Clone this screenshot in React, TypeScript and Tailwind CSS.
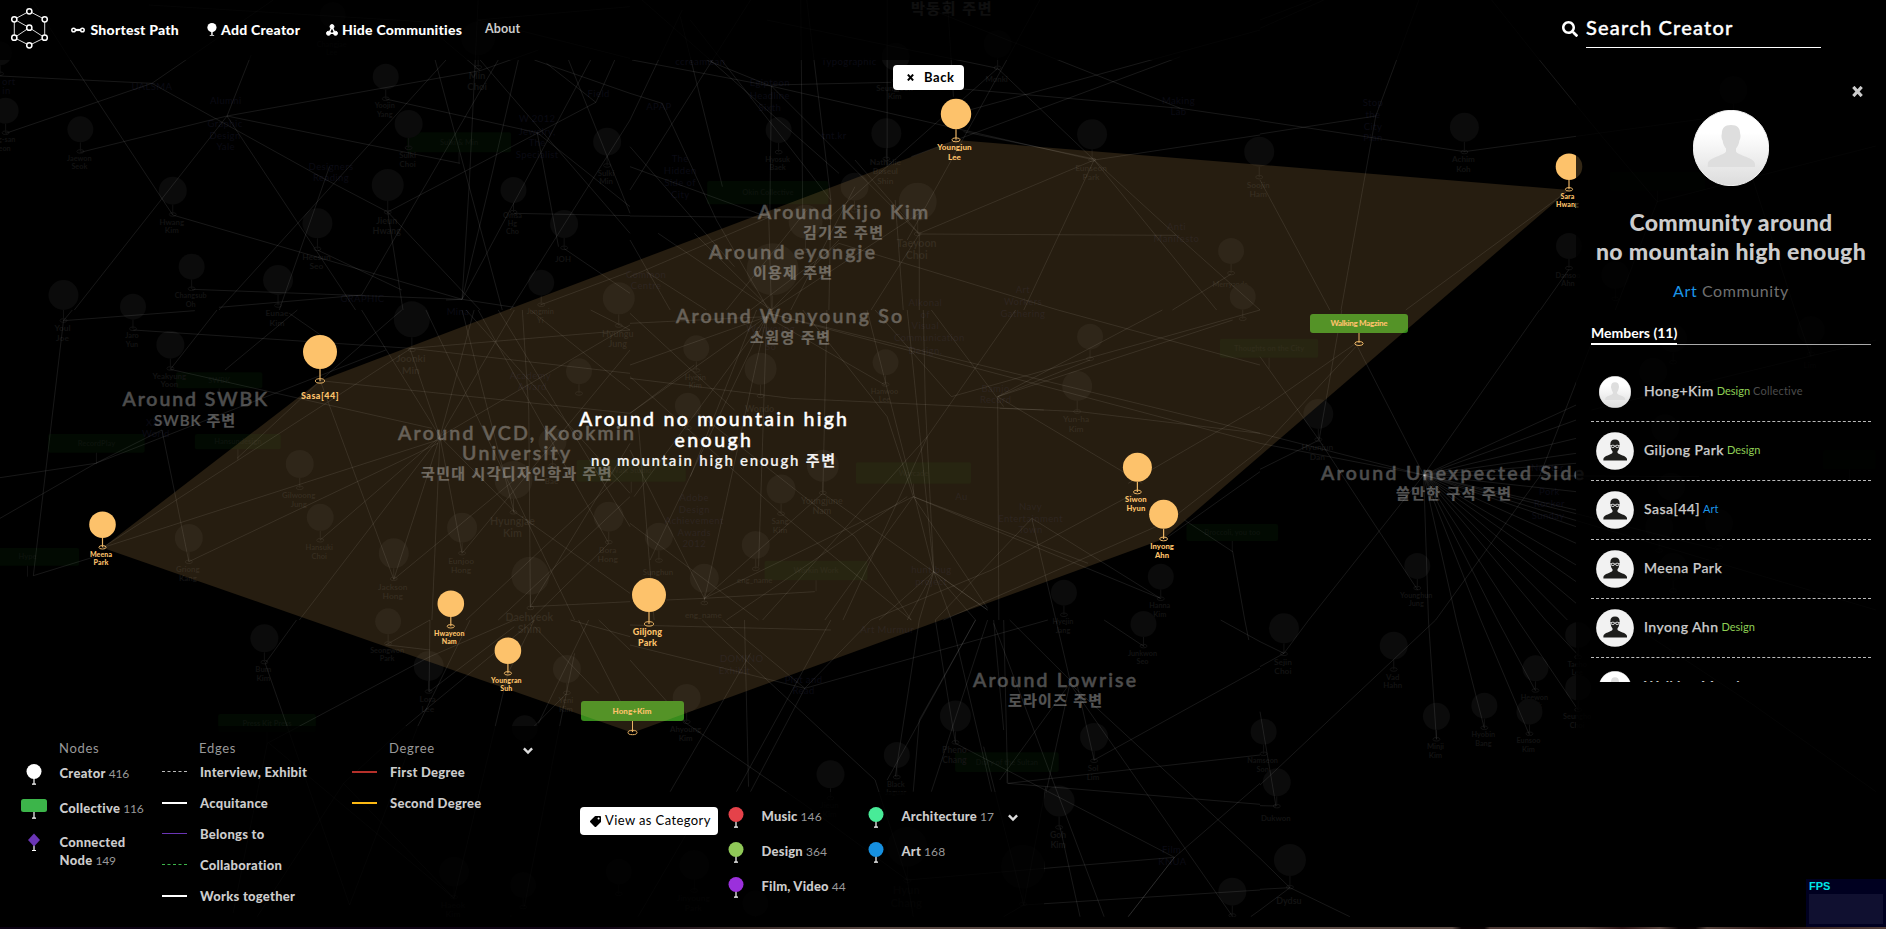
import { FaSearch, FaTag } from "react-icons/fa";

type Seg = [number, number, number, number];
type FaintNode = [number, number, number, string];
type Box = [number, number, number, number, string];
type Note = [number, number, string];

interface Sector {
  ox: number;
  oy: number;
  sx: number;
  edges: Seg[];
  nodes: FaintNode[];
  boxes: Box[];
  notes: Note[];
}

const SX = 0.4018;
const SXR = 0.3992;
const SY = 1 / 3;

const sectors: Sector[] = [
  {
    ox: 0, oy: 0, sx: SX,
    edges: [
      [0, 228, 378, 250], [378, 250, 680, 0], [378, 250, 14, 400], [378, 250, 805, 535], [805, 535, 965, 636],
      [80, 0, 175, 180], [175, 180, 430, 645], [430, 645, 1150, 898], [565, 348, 625, 165], [565, 348, 200, 457],
      [565, 348, 1195, 212], [565, 348, 1145, 490], [565, 348, 185, 930], [565, 348, 885, 930], [960, 297, 1337, 398],
      [965, 636, 1483, 307], [965, 636, 1003, 930], [965, 636, 1195, 930], [1190, 0, 1168, 550], [1168, 550, 1150, 898],
      [1110, 180, 545, 930], [1083, 180, 1250, 930], [1195, 180, 1568, 700], [1290, 180, 1225, 520], [1225, 520, 1150, 898],
      [1330, 180, 1568, 280], [1360, 190, 1483, 307], [1337, 398, 1390, 740], [1337, 398, 1568, 620], [1280, 640, 1568, 647],
      [1403, 745, 1568, 880], [1470, 180, 1150, 898], [1415, 180, 1568, 640], [1568, 360, 1270, 930], [1530, 180, 1483, 307],
      [478, 868, 1150, 898], [545, 922, 900, 885], [790, 750, 1000, 870], [820, 500, 695, 930], [1150, 898, 1280, 922],
      [1110, 900, 1150, 898], [1240, 180, 900, 885], [370, 15, 1050, 65], [1195, 212, 1340, 150], [1050, 65, 1195, 212],
      [1190, 60, 1568, 175], [1190, 60, 1568, 20], [1345, 915, 1568, 815],
    ],
    nodes: [
      [960, 230, 13, "Yoojin|Yang"], [200, 388, 13, "Jaewon|Seok"], [14, 332, 13, "ng-san|eon"], [1017, 372, 14, "Sulki|Choi"],
      [965, 555, 16, "Jieun|Hwang"], [430, 572, 14, "Hwang|Kim"], [790, 670, 15, "Heesun|Seo"], [477, 800, 13, "Changsub|Oh"],
      [1278, 570, 13, "Omsa|Hg|Cho"], [1404, 672, 14, "JOH"], [1511, 425, 14, "Sulki|Min"], [158, 885, 15, "Youl|Joe"],
      [331, 920, 13, "Jaro|Yun"], [692, 840, 15, "Eunae|Kim"], [1025, 958, 18, "Joonki|Min"], [1347, 848, 13, "Jungmin|Yi"],
      [0, 160, 12, ""], [1540, 895, 16, "Hyungu|Jung"], [1190, 115, 17, "Min|Choi"], [828, 45, 13, "Changjae|Lee"],
    ],
    boxes: [[1013, 397, 1272, 457, "Sulki & Min"]],
    notes: [
      [22, 247, "ort"], [16, 272, "in"],
      [378, 262, "UALSMA"], [562, 302, "Alumni"], [560, 372, "Graphic"], [560, 407, "Design"], [562, 442, "Yale"],
      [824, 500, "Designers"], [824, 535, "Reading"], [1337, 358, "W 2012"], [1337, 396, "Jewelry,"], [1337, 430, "The"],
      [1337, 466, "Specialist"], [1490, 282, "Field"], [902, 898, "GRAPHIC"],
    ],
  },
  {
    ox: 630, oy: 0, sx: SX,
    edges: [
      [5, 180, 350, 258], [350, 258, 1155, 480], [352, 255, 650, 247], [352, 258, 348, 650], [425, 0, 430, 655],
      [440, 0, 500, 600], [640, 0, 640, 500], [345, 640, 352, 930], [0, 280, 80, 310], [80, 310, 215, 660], [0, 360, 130, 30],
      [125, 50, 230, 560], [300, 0, 0, 570], [150, 60, 500, 600], [30, 0, 520, 520], [0, 648, 345, 652], [345, 652, 0, 830],
      [810, 265, 1370, 325], [1370, 325, 1568, 360], [1160, 478, 830, 395], [700, 470, 1370, 170], [1155, 480, 1568, 405],
      [1155, 480, 720, 700], [720, 702, 1360, 706], [1155, 480, 1360, 706], [1360, 706, 1568, 930], [1155, 480, 980, 930],
      [1155, 480, 1460, 930], [720, 702, 720, 930], [720, 702, 560, 480], [720, 702, 352, 258], [520, 730, 1065, 930],
      [730, 20, 1370, 325], [1020, 0, 690, 720], [915, 205, 1155, 480], [915, 205, 340, 60], [915, 205, 490, 660],
      [845, 330, 1568, 90], [1350, 930, 1495, 823], [790, 0, 805, 290], [345, 652, 0, 500], [352, 930, 70, 700],
      [352, 930, 520, 720], [352, 930, 160, 700], [352, 930, 720, 640], [660, 600, 680, 930], [440, 630, 240, 930],
      [520, 730, 300, 930], [0, 720, 100, 930], [40, 815, 190, 930], [350, 258, 190, 180], [215, 660, 345, 930], [500, 600, 495, 930],
      [720, 702, 600, 930], [560, 560, 400, 930], [0, 440, 260, 800],
    ],
    nodes: [
      [661, 170, 14, "Seungjoon|Kim"], [915, 132, 14, "Monki"], [370, 390, 13, "Hyosuk|Baek"], [638, 400, 15, "Nathalie|Boseul|Shin"],
      [1150, 403, 15, "Eunseon|Park"], [1566, 455, 15, "Soojin|Ham"], [559, 560, 14, ""], [716, 605, 19, "Taeyoon|Choi"],
      [437, 665, 17, ""], [355, 808, 26, ""], [1496, 753, 13, "Merryanda"], [1525, 890, 13, ""],
    ],
    boxes: [[192, 543, 494, 613, "Okin Collective"]],
    notes: [
      [175, 186, "ccreamisan"], [545, 186, "Typographic"], [348, 250, "Egipteon"], [348, 288, "Headline"], [348, 325, "Sixth"],
      [72, 320, "APAP"], [508, 408, "tnt.kr"], [125, 478, "The"], [125, 512, "Hidden"], [125, 548, "Side of"], [125, 584, "City"],
      [1365, 303, "Making"], [1365, 337, "Lab"], [1360, 680, "Anti"], [1360, 716, "Manifesto"], [40, 825, "Common"], [40, 858, "Centre"],
      [735, 908, "Alkonal"], [978, 870, "Art"], [978, 906, "Workers"],
    ],
  },
  {
    ox: 1260, oy: 0, sx: SXR,
    edges: [
      [398, 0, 290, 348], [580, 0, 700, 180], [700, 180, 850, 400], [850, 400, 995, 605], [290, 348, 0, 402], [0, 362, 512, 455],
      [512, 455, 1120, 355], [290, 348, 203, 930], [0, 540, 175, 930], [774, 570, 365, 930], [774, 808, 702, 930],
      [995, 605, 1543, 438], [1235, 540, 1340, 930], [995, 605, 890, 930], [0, 85, 160, 0], [0, 60, 130, 0],
    ],
    nodes: [[512, 382, 14.5, "Achim|Koh"], [774, 738, 13, "Dansoo|Ahn"], [1186, 270, 14, ""], [890, 825, 14, ""]],
    boxes: [[876, 515, 1115, 572, ""]],
    notes: [[283, 310, "Stop"], [283, 344, "the"], [283, 380, "City"], [283, 414, "Plan"]],
  },
  {
    ox: 0, oy: 310, sx: SX,
    edges: [
      [158, 32, 485, 2], [158, 32, 83, 797], [332, 60, 1023, 115], [158, 32, 180, 0], [1023, 115, 1568, 60], [1023, 115, 1568, 190],
      [424, 178, 540, 0], [424, 178, 1075, 355], [403, 360, 470, 755], [0, 503, 238, 460], [238, 460, 960, 120], [0, 625, 238, 460],
      [238, 460, 403, 360], [797, 212, 1568, 310], [797, 212, 980, 808], [797, 212, 1000, 0], [83, 797, 250, 735], [255, 713, 1090, 390],
      [470, 755, 1090, 400], [255, 713, 1023, 115], [590, 445, 797, 212], [1095, 380, 797, 690], [1095, 380, 980, 808],
      [1095, 380, 1075, 930], [1095, 380, 1150, 730], [1095, 380, 745, 930], [1095, 380, 1280, 605], [1095, 380, 900, 0],
      [1095, 380, 1180, 0], [1095, 380, 1280, 0], [1095, 380, 1568, 45], [1095, 380, 1020, 115], [1280, 610, 1150, 0],
      [1320, 890, 1316, 300], [1316, 300, 1300, 0], [1320, 890, 1568, 875], [980, 808, 1310, 480], [1515, 700, 1190, 0],
      [1515, 700, 1320, 930], [1150, 730, 1568, 120], [560, 180, 740, 0], [1160, 0, 1568, 550], [1240, 0, 1568, 650],
      [1320, 0, 1568, 240], [1568, 560, 1240, 930], [1568, 470, 1160, 930], [1280, 605, 1568, 850], [1320, 890, 1568, 400],
      [1060, 0, 1430, 930], [1470, 0, 1568, 60], [720, 10, 840, 110],
    ],
    nodes: [
      [424, 104, 14, "Yeakyung|Yoon"], [1441, 184, 13, ""], [746, 462, 14, "Gilwoong|Jung"], [797, 622, 13.5, "Hansuki|Choi"],
      [470, 684, 14, "Griong|Kang"], [980, 730, 15, "Jackson|Hong"], [1150, 653, 15, "Eunjoo|Hong"], [1278, 510, 19, "Hyungjae|Kim"],
      [1320, 797, 19, "Daehyeok|Shim"], [1515, 620, 15, "Bora|Hong"], [1375, 395, 14, "|Bae"], [966, 934, 13, "Seongwon|Park"],
    ],
    boxes: [
      [438, 187, 653, 235, "SWBK"], [120, 372, 360, 428, "RecordPlay"], [485, 372, 699, 418, "Hansundesign"],
      [-60, 714, 197, 767, "Hype"], [1435, 450, 1707, 515, "Walk Studio"],
    ],
    notes: [[1320, 198, "Academy"], [1325, 232, "Award"], [388, 338, "XXX"], [388, 372, "World"], [1140, 5, "Mina"]],
  },
  {
    ox: 630, oy: 310, sx: SX,
    edges: [
      [756, 785, 690, 0], [756, 785, 735, 280], [735, 280, 730, 0], [756, 785, 590, 0], [705, 560, 1320, 865], [705, 560, 485, 930],
      [705, 560, 185, 865], [705, 560, 890, 895], [915, 260, 1145, 150], [915, 260, 1500, 30], [915, 260, 1325, 0],
      [915, 260, 918, 930], [915, 260, 1275, 520], [0, 205, 400, 265], [400, 265, 1120, 305], [345, 10, 1568, 400],
      [345, 10, 1568, 370], [1065, 0, 1568, 165], [1000, 625, 1060, 930], [1000, 625, 760, 930], [1000, 625, 1320, 865],
      [750, 0, 930, 290], [960, 0, 740, 380], [740, 380, 530, 930], [740, 380, 330, 930], [490, 0, 480, 550],
      [340, 20, 0, 310], [340, 20, 10, 560], [340, 20, 50, 750], [340, 20, 185, 870], [340, 20, 320, 770], [340, 20, 0, 40],
      [340, 20, 635, 225], [340, 20, 0, 165], [185, 865, 460, 845], [185, 865, 480, 550], [90, 870, 185, 865], [376, 610, 700, 930],
      [376, 610, 0, 200], [480, 550, 890, 900], [170, 310, 560, 680], [560, 680, 700, 930], [756, 785, 890, 900],
      [756, 785, 690, 930], [756, 785, 620, 930], [756, 785, 800, 930], [756, 785, 720, 930], [756, 785, 860, 930],
      [1263, 545, 900, 780], [900, 780, 600, 930], [1568, 420, 1328, 645], [780, 930, 1328, 640], [1380, 630, 1500, 725],
      [1500, 725, 1530, 930], [1328, 690, 1568, 485], [1240, 520, 1568, 290], [0, 420, 185, 865], [0, 10, 260, 300],
      [0, 310, 160, 165], [20, 330, 60, 930], [315, 0, 150, 500], [705, 560, 1140, 760], [430, 0, 640, 320], [640, 320, 705, 560],
      [1120, 305, 1568, 370], [690, 560, 240, 930], [610, 0, 800, 260], [800, 260, 1568, 0],
      [0, 640, 320, 930], [920, 295, 1030, 300],
    ],
    nodes: [
      [165, 115, 13, "Hyejin|Kim"], [325, 176, 16, "Wondo"], [144, 287, 13, ""], [636, 157, 13, "Hanwoo|Lee"], [1145, 80, 13, ""],
      [1113, 228, 15, "Yun-ha|Kim"], [480, 467, 16, "Youngjune|Nam"], [376, 537, 14.5, "Sang|Kim"], [72, 680, 14, "Sunghun"],
      [313, 705, 14, "eng_name"], [185, 805, 14.5, "eng_name"], [1080, 848, 13, "Hyejin|Jang"], [1321, 800, 13, "Hanna|Kim"],
    ],
    boxes: [
      [562, 457, 849, 521, "Warcade"], [335, 752, 591, 811, "Workin Work"], [1468, 86, 1713, 143, "Thoughts on the City"],
      [1385, 642, 1613, 693, "Broccoli, you too"],
    ],
    notes: [
      [735, 14, "of"], [735, 48, "Visual"], [745, 85, "Communication"], [735, 122, "Design,"], [978, 12, "Gathering"],
      [910, 236, "Bamjo"], [910, 270, "Record"], [825, 560, "Au"], [160, 565, "Adobe"], [160, 600, "Design"], [160, 634, "Achievement"],
      [160, 670, "Awards"], [160, 702, "2012"], [997, 592, "Navy"], [997, 626, "Entertainment"], [997, 660, "Town"],
      [750, 780, "hunt bug"], [750, 815, "project"], [350, 56, "Wonyoung"], [350, 110, "So"],
    ],
  },
  {
    ox: 1260, oy: 310, sx: SXR,
    edges: [
      [410, 495, 700, 0], [410, 495, 792, 285], [410, 495, 792, 330], [410, 495, 792, 385], [410, 495, 792, 430], [410, 495, 792, 460],
      [410, 495, 1100, 500], [410, 495, 792, 545], [410, 495, 792, 600], [410, 495, 792, 650], [410, 495, 792, 700],
      [410, 495, 792, 765], [410, 495, 792, 815], [410, 495, 792, 880], [410, 495, 770, 930], [410, 495, 715, 930],
      [410, 495, 645, 930], [410, 495, 595, 930], [410, 495, 553, 930], [410, 495, 492, 930], [410, 495, 422, 930],
      [410, 495, 122, 930], [410, 495, 0, 370], [410, 495, 0, 400], [410, 495, 240, 100], [205, 0, 148, 390], [148, 390, 0, 478],
      [0, 140, 148, 390], [148, 390, 395, 840], [0, 300, 240, 100], [0, 420, 240, 110], [410, 495, 1150, 720], [830, 100, 700, 500],
      [700, 500, 440, 930], [830, 300, 1543, 90], [1380, 140, 1340, 0], [410, 495, 1543, 900],
    ],
    nodes: [[146, 312, 15, "Hyunjun|Dan"], [394, 768, 13, "Younghun|Jung"], [1035, 85, 14, ""], [1380, 60, 14, "Lim"], [985, 185, 14, ""], [1015, 355, 14, ""], [1030, 530, 14, ""], [1150, 640, 14, ""], [1000, 650, 14, ""], [1035, 770, 14, ""]],
    boxes: [[1410, 420, 1543, 478, ""]],
    notes: [[720, 475, "Noriter"], [725, 545, "Pork"], [725, 582, "Rocker"], [722, 617, "Sunday"]],
  },
  {
    ox: 0, oy: 620, sx: SX,
    edges: [
      [660, 130, 738, 0], [660, 130, 870, 855], [665, 370, 1070, 110], [1070, 110, 1280, 0], [665, 370, 580, 880], [1068, 215, 1070, 0],
      [1068, 215, 1280, 20], [1010, 318, 1330, 0], [1040, 318, 1170, 0], [870, 855, 1040, 318], [1130, 835, 670, 370],
      [1130, 835, 855, 490], [855, 490, 1010, 318], [1264, 160, 1130, 835], [1390, 335, 1430, 100], [1390, 335, 1305, 860],
      [1410, 220, 1330, 318], [1330, 20, 1490, 220], [1420, 0, 1568, 50], [1440, 0, 1568, 300], [1490, 0, 1568, 90], [640, 890, 855, 490],
      [1070, 90, 965, 75], [1340, 310, 1465, 0], [960, 75, 1070, 0], [1264, 160, 1330, 0],
    ],
    nodes: [
      [658, 55, 14, "Bum|Kim"], [1067, 138, 15, "Lora|Lee"], [1411, 147, 14, "Yeni|Kim"], [1306, 325, 13, ""], [1130, 755, 15, "Haeok|Kim"],
      [1302, 795, 13, "Jaeyoon"], [1540, 755, 13, ""],
    ],
    boxes: [[543, 282, 786, 337, "Press Kit Press"]],
    notes: [],
  },
  {
    ox: 630, oy: 620, sx: SX,
    edges: [
      [890, 0, 750, 515], [860, 0, 640, 480], [905, 0, 930, 330], [930, 0, 940, 490], [945, 0, 1095, 180], [1060, 0, 1095, 180],
      [1095, 190, 1035, 520], [1095, 190, 920, 480], [1095, 190, 1568, 715], [1155, 420, 1568, 145], [1155, 420, 1110, 180],
      [810, 370, 1355, 712], [940, 490, 1568, 405], [940, 490, 1568, 553], [1355, 712, 690, 780], [1355, 712, 1240, 890],
      [1355, 712, 1568, 490], [980, 855, 1568, 810], [435, 205, 1040, 0], [435, 205, 0, 75], [435, 205, 230, 0], [435, 205, 600, 0],
      [180, 0, 610, 480], [0, 15, 500, 30], [285, 0, 295, 500], [140, 310, 430, 550], [660, 470, 720, 0], [760, 0, 810, 370],
      [800, 0, 900, 515], [905, 10, 1180, 890], [1035, 500, 980, 855], [1070, 620, 1120, 890], [1100, 200, 1500, 890],
      [1470, 0, 1568, 65], [1280, 80, 1180, 0], [100, 515, 300, 100], [300, 515, 435, 205], [265, 515, 500, 0], [690, 780, 430, 550],
      [690, 780, 705, 890], [980, 855, 880, 380], [980, 855, 930, 890], [1240, 890, 1355, 712], [140, 310, 0, 120], [705, 515, 720, 300],
      [720, 300, 860, 0], [1530, 0, 1540, 60], [20, 890, 180, 560], [1545, 890, 1568, 870], [690, 780, 610, 480],
    ],
    nodes: [
      [1278, 12, 13, "Junkwon|Seo"], [141, 234, 14, "Ahyoung|Kim"], [810, 288, 15.5, "Pheno|Chang"], [1155, 351, 14, "Sol|Lim"],
      [664, 405, 13, "Black|Jaguar"], [499, 463, 14, "Jieun|Kim"], [1068, 543, 15.5, "Goh|Kim"], [1499, 815, 14, ""], [1577, 335, 13, "Namseon|Son"],
      [978, 740, 22, ""], [690, 680, 20, "Hyun|Chang"], [160, 735, 15, "Jinyoung|Park"], [312, 850, 13, ""],
    ],
    boxes: [[809, 397, 1067, 456, "Diary of the Sultan"]],
    notes: [[278, 118, "DOMINO"], [260, 154, "Exhibit"], [432, 180, "Plot and"], [432, 214, "Read"], [1348, 690, "Film"], [1350, 726, "KNUA"], [640, 30, "Art Murmur"]],
  },
  {
    ox: 1260, oy: 620, sx: SXR,
    edges: [
      [422, 0, 442, 358], [492, 0, 562, 325], [553, 0, 675, 345], [595, 0, 690, 212], [645, 0, 797, 270], [715, 0, 797, 105],
      [440, 0, 0, 495], [60, 100, 0, 65], [60, 100, 122, 0], [60, 100, 0, 140], [965, 40, 1230, 250], [1230, 250, 1543, 515],
      [0, 275, 40, 558], [0, 557, 40, 558], [75, 803, 225, 890], [75, 803, 0, 715], [75, 803, 0, 870], [75, 803, 0, 808],
    ],
    nodes: [
      [335, 77, 14, "Vad|Hahn"], [442, 289, 13.5, "Minji|Kim"], [562, 257, 13, "Hyobin|Bang"], [690, 145, 13, "Heewon|Park"],
      [675, 275, 13, "Eunsoo|Kim"], [797, 203, 13, "Seungho|Choi"], [797, 45, 13, "Taeho|Lee"], [42, 487, 14, "Dukwon"], [75, 720, 16, "Dydsu"],
      [60, 25, 15, "Sejin|Choi"],
    ],
    boxes: [],
    notes: [],
  },
];

function FaintSector({ s }: { s: Sector }) {
  const X = (x: number) => s.ox + x * s.sx;
  const Y = (y: number) => s.oy + y * SY;
  return (
    <g>
      {s.boxes.map(([x1, y1, x2, y2, label], i) => (
        <g key={i}>
          <rect x={X(x1)} y={Y(y1)} width={X(x2) - X(x1)} height={Y(y2) - Y(y1)} rx="2" fill="#020a02" />
          <path d={`M${(X(x1) + X(x2)) / 2} ${Y(y2)}v11`} stroke="#111" />
          <text x={(X(x1) + X(x2)) / 2} y={(Y(y1) + Y(y2)) / 2 + 2.5} fontSize="7.5" fontWeight="700" textAnchor="middle" fill="#0c120c">{label}</text>
        </g>
      ))}
      {s.notes.map(([x, y, label], i) => (
        <text key={i} x={X(x)} y={Y(y) + 3} fontSize="9.5" textAnchor="middle" fill="#0b0b14" letterSpacing="0.4">{label}</text>
      ))}
      {s.nodes.map(([x, y, r, label], i) => (
        <FaintPin key={i} x={X(x)} y={Y(y)} r={r} label={label} />
      ))}
      {s.edges.map(([x1, y1, x2, y2], i) => (
        <line key={i} x1={X(x1)} y1={Y(y1)} x2={X(x2)} y2={Y(y2)} stroke="#fff" strokeOpacity="0.095" />
      ))}
    </g>
  );
}

function FaintPin({ x, y, r, label }: { x: number; y: number; r: number; label: string }) {
  const lines = label.split("|");
  return (
    <g>
      <circle cx={x} cy={y} r={r} fill="#0b0b0b" />
      <path d={`M${x} ${y + r}V${y + r * 1.7}`} stroke="#121212" />
      <ellipse cx={x} cy={y + r * 1.7} rx="3.5" ry="1.8" fill="none" stroke="#121212" />
      {lines.map((t, i) => (
        <text key={i} x={x - 1} y={y + r * 2.6 + (i - (lines.length - 1) / 2) * r * 0.63 + 2} fontSize={r * 0.56} textAnchor="middle" fill="#131313" fontWeight="700">{t}</text>
      ))}
    </g>
  );
}

const members: [number, number, number, string][] = [
  [956, 114, 15.2, "Youngjun|Lee"],
  [1569, 166.7, 13.3, "Sara|Hwang"],
  [320, 352, 17, "Sasa[44]"],
  [102.5, 524.7, 13.3, "Meena|Park"],
  [450.8, 603.7, 13.3, "Hwayeon|Nam"],
  [507.9, 650.7, 13.3, "Youngran|Suh"],
  [649, 595, 17, "Giljong|Park"],
  [1137.4, 467.3, 14.5, "Siwon|Hyun"],
  [1163.6, 514.3, 14.5, "Inyong|Ahn"],
];

function MemberPin({ x, y, r, label }: { x: number; y: number; r: number; label: string }) {
  const lines = label.split("|");
  const foot = y + r * 1.7;
  const single = lines.length === 1;
  return (
    <g>
      <circle cx={x} cy={y} r={r} fill="#fdc26b" />
      <path d={`M${x} ${y + r}V${foot}`} stroke="#e9b364" strokeWidth="1.2" />
      <ellipse cx={x} cy={foot} rx={r * 0.27} ry={r * 0.13} fill="none" stroke="#e9b364" />
      {lines.map((t, i) => (
        <text key={i} x={single ? x : x - 1.5} y={y + r * 2.52 + (i - (lines.length - 1) / 2) * r * 0.63 + (single ? 4.5 : 2.5)} fontSize={r * 0.53} letterSpacing={single ? 0.5 : 0.1} fontWeight="900" textAnchor="middle" fill="#fdc26b">{t}</text>
      ))}
    </g>
  );
}

const headlines: [string, number, number, number, number, number][] = [
  ["Around Kijo Kim", 758, 927, 219, 19.5, 0.3],
  ["김기조 주변", 803, 882, 238, 15, 0.33],
  ["Around eyongje", 709, 874, 259, 19.5, 0.3],
  ["이용제 주변", 753, 831, 278, 15, 0.33],
  ["Around Wonyoung So", 676, 901, 323, 19.5, 0.3],
  ["소원영 주변", 750, 829, 342.5, 15, 0.33],
  ["Around SWBK", 122.5, 266, 406, 19.5, 0.3],
  ["SWBK 주변", 154, 234, 425.5, 15, 0.33],
  ["Around VCD, Kookmin", 398, 633, 440, 19.5, 0.3],
  ["University", 462, 569, 460, 19.5, 0.3],
  ["국민대 시각디자인학과 주변", 421, 610.5, 479, 15, 0.33],
  ["Around Unexpected Side", 1321, 1583, 480, 19.5, 0.3],
  ["쓸만한 구석 주변", 1396, 1510, 499, 15, 0.33],
  ["Around Lowrise", 973, 1135, 687, 19.5, 0.3],
  ["로라이즈 주변", 1008, 1101, 706, 15, 0.33],
  ["박동회 주변", 911, 990.5, 14, 15, 0.3],
  ["Around no mountain high", 579, 846, 426, 19.5, 1],
  ["enough", 674.5, 750, 446.5, 19.5, 1],
  ["no mountain high enough 주변", 591, 834, 466, 15, 0.95],
];

function Graph() {
  return (
    <svg className="absolute inset-0" width="1886" height="929" viewBox="0 0 1886 929" fontFamily="Lato, 'Noto Sans CJK KR', sans-serif">
      <clipPath id="canvas"><rect width="1876" height="917" /></clipPath>
      <g clipPath="url(#canvas)">
        {sectors.map((s, i) => <FaintSector key={i} s={s} />)}
        <rect x="581" y="701" width="103" height="20" rx="3" fill="#378b1c" />
        <rect x="1310" y="314" width="98" height="19" rx="3" fill="#378b1c" />
        <path d="M956 140L1569 190L1163.5 539L632.4 732.7L102.5 547.7L320 380.7Z" fill="#fdc26b" fillOpacity="0.15" />
        <g stroke="#e9b364" fill="none">
          <path d="M632.5 721V732M1359 333V343" />
          <ellipse cx="632.5" cy="732.5" rx="4.5" ry="2.2" />
          <ellipse cx="1359" cy="343.5" rx="4.2" ry="2" />
        </g>
        <g fill="#fdc26b" fontSize="8" fontWeight="900" textAnchor="middle">
          <text x="632" y="713.5" textLength="39">Hong+Kim</text>
          <text x="1359" y="326" textLength="57">Walking Magzine</text>
        </g>
        {members.map(([x, y, r, l]) => <MemberPin key={l} x={x} y={y} r={r} label={l} />)}
        {headlines.map(([t, x1, x2, y, size, o]) => (
          <text key={t} x={x1} y={y} textLength={x2 - x1 + 1} fontSize={size} fontWeight={size > 16 ? 500 : 600} fill="#fff" stroke="#fff" strokeWidth={size > 16 ? 0.45 : 0.15} opacity={o}>{t}</text>
        ))}
      </g>
    </svg>
  );
}

function Logo() {
  const pts = [[29.3, 11.3], [14.3, 19.3], [44.7, 19.3], [29.3, 27.7], [14.3, 37.7], [44.7, 37.7], [29.3, 45.3]];
  return (
    <svg width="60" height="60" viewBox="0 0 60 60" className="shrink-0" stroke="#fff" fill="none">
      <path d="M29.3 11.3L14.3 19.3V37.7L29.3 45.3L44.7 37.7V19.3L29.3 11.3M14.3 19.3L29.3 27.7L14.3 37.7M29.3 27.7L44.7 37.7" strokeWidth="1" strokeOpacity="0.85" />
      {pts.map(([x, y], i) => <circle key={i} cx={x} cy={y} r="2.6" fill="#000" strokeWidth="1.5" />)}
    </svg>
  );
}

function Header() {
  return (
    <header className="relative flex h-[60px] items-start bg-black/80 text-white">
      <Logo />
      <nav className="flex h-[59px] items-center text-[14px] font-black whitespace-nowrap">
        <a className="ml-[11px] flex w-[136px] items-center">
          <svg width="14" height="6" viewBox="0 0 14 6" className="mr-[5.5px]" fill="none" stroke="#fff" strokeWidth="1.5">
            <circle cx="2.6" cy="3" r="1.800" /><circle cx="11.4" cy="3" r="1.800" /><path d="M4.500 3h5" strokeWidth="2.200" />
          </svg>
          <span className="tracking-[0.25px]">Shortest Path</span>
        </a>
        <a className="flex w-[119px] items-center">
          <svg width="10" height="13" viewBox="0 0 9.500 13" className="mr-[4px]" fill="#fff">
            <circle cx="4.700" cy="4.600" r="4.600" /><path d="M4 8h1.400v4.200H4zM2.500 12h4.400v.8H2.500z" />
          </svg>
          <span className="tracking-[0.25px]">Add Creator</span>
        </a>
        <a className="flex w-[159px] items-center">
          <svg width="12" height="12" viewBox="0 0 12 12" className="mr-[4px]" fill="#fff" stroke="#fff">
            <path d="M6 3L3 9.200H9Z" strokeWidth="1.6" fill="none" />
            <circle cx="6" cy="2.600" r="2" /><circle cx="2.500" cy="9.300" r="2" /><circle cx="9.500" cy="9.300" r="2" />
          </svg>
          <span className="tracking-[0.25px]">Hide Communities</span>
        </a>
        <a className="text-[12.5px] font-bold tracking-[0.1px] text-[#ccc]">About</a>
      </nav>
      <div className="ml-auto mr-[65px] flex h-[48px] items-start">
        <FaSearch className="mt-[21px] mr-[8px] size-[16px]" />
        <div className="h-[48px] w-[235px] border-b border-white pt-[13px] text-[20px] leading-[28px] font-medium tracking-[1.2px] [-webkit-text-stroke:0.4px_#fff]">Search Creator</div>
      </div>
    </header>
  );
}

function Silhouette({ size, glasses }: { size: number; glasses: boolean }) {
  return (
    <svg width={size} height={size} viewBox="0 0 76 76" className="shrink-0">
      <defs>
        <linearGradient id="disc" x1="0" y1="0" x2="0" y2="1"><stop offset="0.3" stopColor="#fff" /><stop offset="1" stopColor="#dcdcdc" /></linearGradient>
      </defs>
      <circle cx="38" cy="38" r="37.700" fill={glasses ? "#f2f2f2" : "url(#disc)"} stroke={glasses ? "none" : "#f4f4f4"} />
      <path
        d="M38 15C31.500 15 29 18 28.800 24C28.200 25.500 28.500 29 29.600 30.500C30 34 31.500 37 33 38.500V41.500C31.500 45.500 15 47.500 14.800 54V57H62V54C61.800 47.500 44.500 45.500 43 41.500V38.500C44.500 37 46 34 46.400 30.500C47.500 29 47.800 25.500 47.200 24C47 18 44.500 15 38 15Z"
        fill={glasses ? "#1d1d1b" : "#dedede"}
      />
      {glasses && (
        <g fill="none" stroke="#f2f2f2" strokeWidth="1.800">
          <rect x="30.500" y="26.500" width="6" height="4.500" rx="2" /><rect x="39.500" y="26.500" width="6" height="4.500" rx="2" />
          <path d="M28 27.500h3M36 28h4M45 27.500h3" />
        </g>
      )}
    </svg>
  );
}

function Cross({ className, size }: { className: string; size: number }) {
  return (
    <svg width={size} height={size} viewBox="0 0 10 10" className={className} stroke="currentColor" strokeWidth="2.800">
      <path d="M1.200 .8L8.800 9.200M8.800 .8L1.200 9.200" />
    </svg>
  );
}

const roster = [
  { name: "Hong+Kim", tag: "Design", color: "text-[#8fcf55]", extra: "Collective", glasses: false, size: 32 },
  { name: "Giljong Park", tag: "Design", color: "text-[#8fcf55]", extra: "", glasses: true, size: 38 },
  { name: "Sasa[44]", tag: "Art", color: "text-[#1b95e8]", extra: "", glasses: true, size: 38 },
  { name: "Meena Park", tag: "", color: "", extra: "", glasses: true, size: 38 },
  { name: "Inyong Ahn", tag: "Design", color: "text-[#8fcf55]", extra: "", glasses: true, size: 38 },
  { name: "Walking Magzine", tag: "", color: "", extra: "", glasses: false, size: 32 },
];

function CommunityPanel() {
  return (
    <aside className="absolute top-[60px] right-0 flex h-[867px] w-[310px] flex-col bg-black/80 pr-[15px] pl-[15px] text-[#ccc]">
      <div className="flex h-[50px] justify-end pt-[26px]"><Cross size={11} className="mr-[8px]" /></div>
      <div className="flex justify-center"><Silhouette size={76} glasses={false} /></div>
      <h1 className="mt-[22px] text-center text-[23px] leading-[29px] font-black whitespace-nowrap tracking-[0.35px]">
        Community around<br /><span className="-mx-4">no mountain high enough</span>
      </h1>
      <p className="mt-[13px] text-center text-[16px] leading-[24px] tracking-[0.6px] text-[#6f6f6f]">
        <span className="text-[#1b95e8]">Art</span> Community
      </p>
      <div className="mt-[20px] flex h-[22px] border-b border-[#aaa]">
        <span className="h-[22px] border-b-2 border-white text-[14px] leading-[19px] font-bold text-white">Members (11)</span>
      </div>
      <ul className="mt-[18px] h-[319px] overflow-hidden">
        {roster.map((m) => (
          <li key={m.name} className="flex h-[59px] items-center border-b border-dashed border-[#bbb] pl-[5px]">
            <span className="flex w-[38px] justify-center"><Silhouette size={m.size} glasses={m.glasses} /></span>
            <span className="mb-[3px] ml-[10px] text-[14px] font-medium tracking-[0.45px] [-webkit-text-stroke:0.25px_#ccc]">{m.name}</span>
            <span className={"mb-[2px] ml-[3px] text-[11px] " + m.color}>{m.tag}</span>
            <span className="mb-[2px] ml-[3px] text-[11px] tracking-[0.2px] text-[#4c4c4c]">{m.extra}</span>
          </li>
        ))}
      </ul>
    </aside>
  );
}

function Pin({ fill }: { fill: string }) {
  return (
    <svg width="26" height="22" viewBox="0 0 26 22" className="shrink-0">
      <path d="M13 13V20M11 20.200h4" stroke="#fff" strokeWidth="1.200" />
      <circle cx="13" cy="7.500" r="7.500" fill={fill} />
    </svg>
  );
}

function Chevron({ className }: { className: string }) {
  return (
    <svg width="10" height="8" viewBox="0 0 10 8" className={className} fill="none" stroke="#ddd" strokeWidth="2.400">
      <path d="M.9 1.300L5 5.600L9.100 1.300" />
    </svg>
  );
}

const edgeKinds = [
  { label: "Interview, Exhibit", line: "border-t border-dashed border-[#bbb]" },
  { label: "Acquitance", line: "border-t-2 border-white" },
  { label: "Belongs to", line: "border-t border-[#6a35b5]" },
  { label: "Collaboration", line: "border-t border-dashed border-[#3cb54a]" },
  { label: "Works together", line: "border-t-2 border-white" },
];

const degrees = [
  { label: "First Degree", line: "border-t-2 border-[#b5302a]" },
  { label: "Second Degree", line: "border-t-2 border-[#fdb913]" },
];

function LineRows({ rows }: { rows: { label: string; line: string }[] }) {
  return (
    <>
      {rows.map((e) => (
        <div key={e.label} className="flex h-[31px] items-center">
          <span className={"w-[25px] " + e.line} />
          <span className="mt-[2px] ml-[13px] tracking-[0.27px]">{e.label}</span>
        </div>
      ))}
    </>
  );
}

function Legend() {
  const heading = "block h-[15px] text-[13px] leading-[15px] font-normal tracking-[0.7px] text-[#999]";
  const count = "ml-[3px] text-[12px] font-normal tracking-[-0.2px] text-[#999]";
  return (
    <section className="absolute top-[726px] left-0 flex h-[201px] w-[580px] bg-black/80 pt-[15px] text-[13px] font-black tracking-[0.3px] whitespace-nowrap text-[#ccc]">
      <div className="w-[162px] pl-[21px]">
        <span className={heading + " ml-[38px]"}>Nodes</span>
        <div className="mt-[8px] flex h-[35px] items-start leading-[18px]"><Pin fill="#fff" /><span className="ml-[12.500px]">Creator<span className={count}>416</span></span></div>
        <div className="flex h-[34px] items-start leading-[18px]">
          <svg width="26" height="22" viewBox="0 0 26 22" className="shrink-0 -translate-y-px"><path d="M13 13V20M11 20.200h4" stroke="#fff" strokeWidth="1.200" /><rect y="1" width="26" height="13" rx="2.500" fill="#3cb54a" /></svg>
          <span className="ml-[12.500px]">Collective<span className={count}>116</span></span>
        </div>
        <div className="flex items-start leading-[18px]">
          <svg width="26" height="22" viewBox="0 0 26 22" className="shrink-0"><path d="M13 11V17M11 17.500h4" stroke="#fff" strokeWidth="1.200" /><path d="M13 .500L19 7L13 13.500L7 7Z" fill="#6a35b5" /></svg>
          <span className="ml-[12.500px]">Connected<br />Node<span className={count}>149</span></span>
        </div>
      </div>
      <div className="w-[190px]">
        <span className={heading + " ml-[37px]"}>Edges</span>
        <LineRows rows={edgeKinds} />
      </div>
      <div className="w-[130px]">
        <span className={heading + " ml-[37px]"}>Degree</span>
        <LineRows rows={degrees} />
      </div>
      <Chevron className="mt-[6px] ml-[41px]" />
    </section>
  );
}

function Category({ fill, name, n }: { fill: string; name: string; n: number }) {
  return (
    <div className="flex h-[35px] items-start leading-[18px]">
      <Pin fill={fill} />
      <span className="ml-[13px]">{name}<span className="ml-[3px] text-[12px] font-normal tracking-[0.1px] text-[#999]">{n}</span></span>
    </div>
  );
}

function Categories() {
  return (
    <section className="absolute top-[792px] left-[580px] flex h-[135px] w-[464px] items-start bg-black/80 pt-[15px] text-[13px] font-black tracking-[0.2px] whitespace-nowrap text-[#ccc]">
      <button className="flex h-[28px] w-[138px] items-center rounded-[4px] bg-white pl-[10px] text-[13px] font-normal tracking-[0.4px] text-black">
        <FaTag className="mr-[4px] size-[11px] -scale-x-100" />View as Category
      </button>
      <div className="ml-[4.500px] w-[140px]">
        <Category fill="#e5424a" name="Music" n={146} />
        <Category fill="#90c858" name="Design" n={364} />
        <Category fill="#9b30dc" name="Film, Video" n={44} />
      </div>
      <div className="w-[130px]">
        <Category fill="#48eb98" name="Architecture" n={17} />
        <Category fill="#1690e0" name="Art" n={168} />
      </div>
      <Chevron className="mt-[7px] ml-[15px]" />
    </section>
  );
}

export default function App() {
  return (
    <main className="relative h-[929px] w-full overflow-hidden bg-black font-[Lato,'Noto_Sans_CJK_KR',sans-serif]">
      <Graph />
      <Header />
      <button className="absolute top-[65px] left-[893px] flex h-[25px] w-[71px] items-center rounded-[4px] bg-white pl-[14px] text-[13px] font-bold tracking-[0.6px] text-black">
        <Cross size={7} className="mr-[10px]" />Back
      </button>
      <CommunityPanel />
      <Legend />
      <Categories />
      <div className="absolute right-0 bottom-[2px] h-[48px] w-[80px] bg-[#000020] px-[3px] font-['Liberation_Sans',sans-serif]">
        <div className="h-[15px] text-[11px] leading-[15px] font-bold text-[#0ff] opacity-90">FPS</div>
        <div className="h-[30px] w-[74px] bg-[#101030]" />
      </div>
      <div className="absolute bottom-0 left-0 h-[2px] w-full bg-[linear-gradient(90deg,#0c0314_0%,#120616_32%,#3a2a28_40%,#54423d_46%,#5c4a44_77%,#0a0204_77.500%,#0a0204_78.700%,#4c3834_79%,#5a443e_84%,#2c1214_86%,#5a443e_88%,#0a0204_89%,#0a0204_89.900%,#54403a_90.500%,#301818_94%,#54403a_100%)]" />
    </main>
  );
}
